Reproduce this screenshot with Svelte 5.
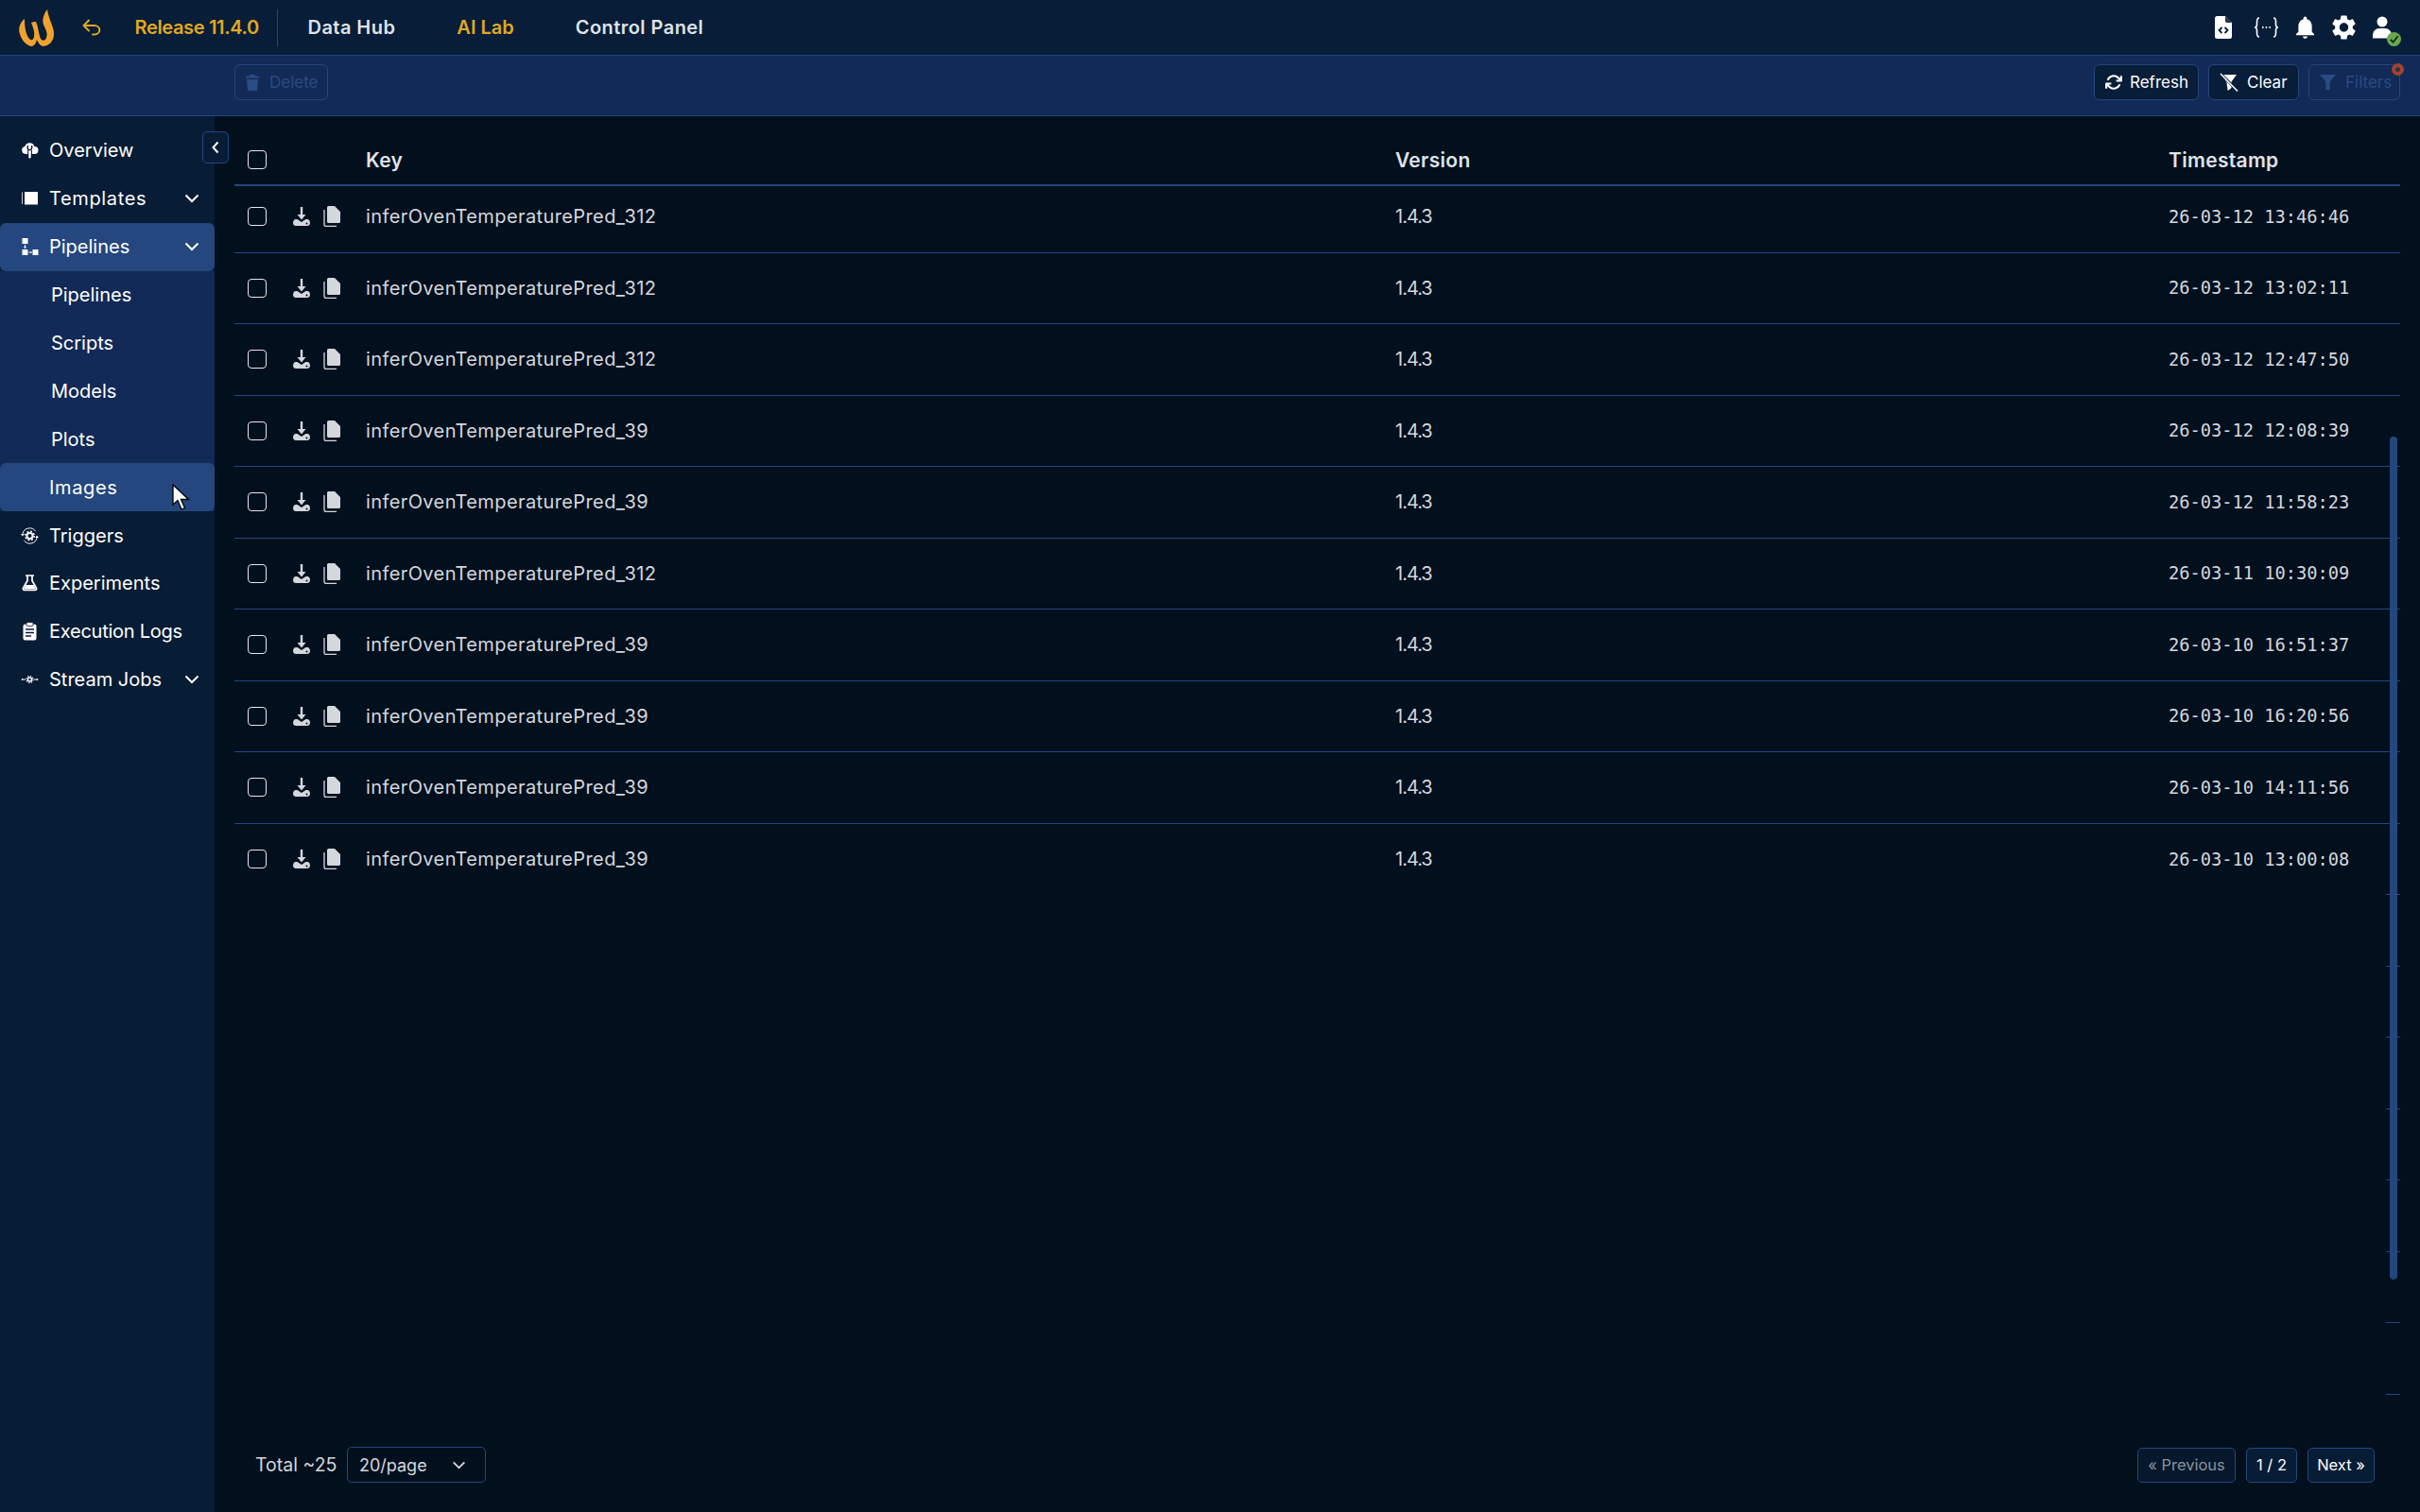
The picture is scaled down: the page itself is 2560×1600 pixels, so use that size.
<script>
	const subItems = ['Pipelines', 'Scripts', 'Models', 'Plots'];

	const rows = [
		['inferOvenTemperaturePred_312', '26-03-12 13:46:46'],
		['inferOvenTemperaturePred_312', '26-03-12 13:02:11'],
		['inferOvenTemperaturePred_312', '26-03-12 12:47:50'],
		['inferOvenTemperaturePred_39', '26-03-12 12:08:39'],
		['inferOvenTemperaturePred_39', '26-03-12 11:58:23'],
		['inferOvenTemperaturePred_312', '26-03-11 10:30:09'],
		['inferOvenTemperaturePred_39', '26-03-10 16:51:37'],
		['inferOvenTemperaturePred_39', '26-03-10 16:20:56'],
		['inferOvenTemperaturePred_39', '26-03-10 14:11:56'],
		['inferOvenTemperaturePred_39', '26-03-10 13:00:08']
	];

	const fillers = [1, 2, 3, 4, 5, 6, 7];
</script>

<div class="app">
	<header class="topbar">
		<svg class="logo" viewBox="17 9 40 40" width="40" height="40">
			<path fill="#f0a22e" d="M26 20C21 24 19 30 21 36C23 43 28 48 33 49C36 49 38 46 39 42C41 46 43 49 46 49C52 48 57 44 57 36C57 28 52 22 50 10C47 14 44 20 46 26C48 31 51 35 49 40C48 43 45 44 43 41C41 37 41 30 38 23C36 23 35 23 33 24C35 29 37 34 36 39C35 43 33 43 31 41C27 36 26 28 26 20Z" />
		</svg>
		<svg class="back" viewBox="0 0 20 18" width="20" height="18" fill="none" stroke="#e2a81f" stroke-width="2" stroke-linecap="round" stroke-linejoin="round">
			<path d="M7 1.5L1.5 7L7 12.5M1.5 7H13a5 4.5 0 0 1 0 9.5h-2" />
		</svg>
		<span class="release">Release 11.4.0</span>
		<span class="divider"></span>
		<nav class="nav">
			<span>Data Hub</span>
			<span class="active">AI Lab</span>
			<span>Control Panel</span>
		</nav>
		<div class="top-icons">
			<svg viewBox="0 0 18 24" width="18" height="24">
				<path fill="#fff" d="M2.5 0H11l7 7v14.5a2.5 2.5 0 0 1-2.5 2.5h-13A2.5 2.5 0 0 1 0 21.500V2.500A2.500 2.500 0 0 1 2.500 0Z" />
				<path fill="#071d38" d="M11 0v5a2 2 0 0 0 2 2h5l-1-1-5-5Z" opacity="0.9" />
				<path fill="none" stroke="#071d38" stroke-width="1.800" d="M7.500 12L4.500 15L7.500 18M10.500 12L13.500 15L10.500 18" />
			</svg>
			<svg viewBox="0 0 27 22" width="27" height="22" fill="none" stroke="#fff" stroke-width="1.600" class="braces">
				<path d="M6 1C3.500 1 3.500 3 3.500 5V8C3.500 10 2.500 11 1 11C2.500 11 3.500 12 3.500 14V17C3.500 19 3.500 21 6 21M21 1C23.500 1 23.500 3 23.500 5V8C23.500 10 24.500 11 26 11C24.500 11 23.500 12 23.500 14V17C23.500 19 23.500 21 21 21" />
				<path d="M9 11h1.500M12.750 11h1.500M16.500 11h1.500" stroke-width="2" />
			</svg>
			<svg viewBox="3.500 2 17 21" width="21" height="25" class="bell"><path fill="#fff" d="M12 22c1.100 0 2-.9 2-2h-4c0 1.100.89 2 2 2zm6-6v-5c0-3.070-1.640-5.640-4.500-6.320V4c0-.83-.67-1.500-1.500-1.500s-1.500.67-1.500 1.500v.68C7.630 5.360 6 7.920 6 11v5l-2 2v1h16v-1l-2-2z" /></svg>
			<svg viewBox="2.400 2 19.200 20" width="25" height="26"><path fill="#fff" d="M19.140 12.940c.04-.3.06-.61.06-.94 0-.32-.02-.64-.07-.94l2.030-1.580c.18-.14.23-.41.12-.61l-1.920-3.320c-.12-.22-.37-.29-.59-.22l-2.390.96c-.5-.38-1.030-.7-1.620-.94l-.36-2.540c-.04-.24-.24-.41-.48-.41h-3.840c-.24 0-.43.17-.47.41l-.36 2.540c-.59.24-1.130.57-1.620.94l-2.390-.96c-.22-.08-.47 0-.59.22L2.740 8.870c-.12.21-.08.47.12.61l2.030 1.580c-.05.3-.09.63-.09.94s.02.64.07.94l-2.030 1.580c-.18.14-.23.41-.12.61l1.920 3.320c.12.22.37.29.59.22l2.390-.96c.5.38 1.030.7 1.620.94l.36 2.540c.05.24.24.41.48.41h3.840c.24 0 .44-.17.47-.41l.36-2.540c.59-.24 1.130-.56 1.620-.94l2.390.96c.22.08.47 0 .59-.22l1.920-3.320c.12-.22.07-.47-.12-.61l-2.010-1.580zM12 15.600c-1.980 0-3.600-1.620-3.600-3.600s1.620-3.600 3.600-3.600 3.600 1.620 3.600 3.600-1.620 3.600-3.600 3.600z" /></svg>
			<span class="user">
				<svg viewBox="0 0 20 24" width="20" height="24">
					<circle cx="10" cy="6" r="5.500" fill="#fff" />
					<path fill="#fff" d="M0 21c0-5 3-8 7-8h6c4 0 7 3 7 8v2.500H0Z" />
				</svg>
				<span class="status">
					<svg viewBox="0 0 12 12" width="11" height="11" fill="none" stroke="#0c2a18" stroke-width="2"><path d="M2 6.500L5 9.500L10.500 2.500" /></svg>
				</span>
			</span>
		</div>
	</header>

	<div class="toolbar">
		<button class="btn off delete">
			<svg viewBox="0 0 14 17" width="14" height="17" fill="currentColor"><path d="M4.500 0h5l.7 1.500H14V3.500H0V1.500h3.800ZM1 5h12l-1 12H2Z" /></svg>
			Delete
		</button>
		<button class="btn refresh">
			<svg viewBox="0 0 24 24" width="18" height="18" fill="none" stroke="#fff" stroke-width="2.800" stroke-linejoin="round"><path d="M22.500 3v7h-7M1.500 21v-7h7M3.500 9a9 9 0 0 1 14.850-3.360L22.500 10M1.500 14l4.150 4.360A9 9 0 0 0 20.500 15" /></svg>
			Refresh
		</button>
		<button class="btn clear">
			<svg viewBox="0 0 20 20" width="20" height="20">
				<path fill="#fff" d="M2 2h16l-5.500 7.500V16l-3 2.500h-1l-1-8Z" />
				<path stroke="#071d38" stroke-width="3" d="M0 0L20 20" />
				<path stroke="#fff" stroke-width="1.500" d="M1 1L19 19.500" />
			</svg>
			Clear
		</button>
		<button class="btn off filters">
			<svg viewBox="0 0 17 16" width="17" height="16" fill="currentColor"><path d="M0 0h17l-6.300 7.500V16H6.300V7.500Z" /></svg>
			Filters
			<span class="dot"></span>
		</button>
	</div>

	<div class="body">
		<aside class="sidebar">
			<a class="item">
				<svg viewBox="0 0 18 18" width="18" height="18">
					<path fill="#fff" d="M4.500 13A4 4 0 0 1 3.800 5.100A5.300 5.300 0 0 1 14 5A4 4 0 0 1 14 13Z" />
					<path fill="none" stroke="#071c35" stroke-width="1.400" d="M6.800 4v2.500a2.200 2.200 0 0 0 4.400 0V4M7.300 9v5M10.700 9v5" />
					<rect x="7.800" y="9" width="2.400" height="8.500" rx="1" fill="#fff" />
				</svg>
				<span>Overview</span>
			</a>
			<a class="item">
				<svg viewBox="0 0 18 18" width="18" height="18">
					<rect x="3.500" y="2" width="14" height="13.500" rx="0.500" fill="#fff" />
					<path stroke="#c9ced6" stroke-width="1" fill="none" d="M1 2.500V15" />
				</svg>
				<span class="loose">Templates</span>
				<svg class="chev" viewBox="0 0 16 10" width="16" height="10" fill="none" stroke="#fff" stroke-width="2"><path d="M1.500 1.500L8 8L14.500 1.500" /></svg>
			</a>
			<a class="item current">
				<svg viewBox="0 0 18 18" width="18" height="18" fill="#fff">
					<rect x="1" y="0" width="6" height="6" />
					<rect x="1" y="12" width="6" height="6" />
					<rect x="12" y="12" width="6" height="6" />
					<path d="M3.500 7h1v4h-1ZM2.500 9h3L4 11ZM8 14.500h3v1H8ZM10 13.500l1.500 1.500L10 16.500Z" />
				</svg>
				<span>Pipelines</span>
				<svg class="chev" viewBox="0 0 16 10" width="16" height="10" fill="none" stroke="#fff" stroke-width="2"><path d="M1.500 1.500L8 8L14.500 1.500" /></svg>
			</a>
			<div class="sub">
				{#each subItems as name}
					<a class="sub-item">{name}</a>
				{/each}
				<a class="sub-item hovered"><span class="loose">Images</span></a>
			</div>
			<a class="item">
				<svg viewBox="0 0 20 20" width="20" height="20" fill="none" stroke="#fff">
					<path stroke-width="1" d="M2 8A8 8 0 0 1 16.500 5M18 12A8 8 0 0 1 3.500 15" />
					<path fill="#fff" stroke="none" d="M0 8h4L2 10.500ZM16 12h4L18 9.500Z" />
					<circle cx="10" cy="10" r="3.200" stroke-width="2" />
					<circle cx="10" cy="10" r="5" stroke-width="1.600" stroke-dasharray="2 1.930" />
				</svg>
				<span>Triggers</span>
			</a>
			<a class="item">
				<svg viewBox="0 0 18 18" width="18" height="18" fill="none" stroke="#fff" stroke-width="1.700">
					<path d="M4.500 1h9M6.500 1v5.500L2.200 14a1.500 1.500 0 0 0 1.300 2.500h11a1.500 1.500 0 0 0 1.300-2.500L11.500 6.500V1" stroke-linejoin="round" />
					<path fill="#fff" stroke="none" d="M5 11h8l2.500 4.500h-13Z" />
				</svg>
				<span>Experiments</span>
			</a>
			<a class="item">
				<svg viewBox="0 0 18 20" width="18" height="20">
					<rect x="2" y="2.500" width="14" height="17" rx="2" fill="#fff" />
					<rect x="5.500" y="0.500" width="7" height="4" rx="1" fill="#fff" stroke="#071c35" stroke-width="0.800" />
					<path stroke="#071c35" stroke-width="1.500" d="M4.500 8h9M4.500 11.500h9M4.500 15h6" />
				</svg>
				<span class="tight">Execution Logs</span>
			</a>
			<a class="item">
				<svg viewBox="0 0 18 18" width="18" height="18" fill="none" stroke="#fff">
					<circle cx="9" cy="9" r="2" stroke-width="1.500" />
					<circle cx="9" cy="9" r="3.500" stroke-width="1.300" stroke-dasharray="1.300 1.450" />
					<path stroke-width="1" d="M2 9h2.500M13.500 9H16" />
					<circle cx="1.200" cy="9" r="1" fill="#fff" stroke="none" />
					<circle cx="16.800" cy="9" r="1" fill="#fff" stroke="none" />
				</svg>
				<span>Stream Jobs</span>
				<svg class="chev" viewBox="0 0 16 10" width="16" height="10" fill="none" stroke="#fff" stroke-width="2"><path d="M1.500 1.500L8 8L14.500 1.500" /></svg>
			</a>
		</aside>

		<main class="main">
			<button class="collapse">
				<svg viewBox="0 0 8 14" width="8" height="14" fill="none" stroke="#fff" stroke-width="2"><path d="M6.500 1.500L1.500 7L6.500 12.500" /></svg>
			</button>
			<svg class="cursor" viewBox="0 0 19 29" width="19" height="29">
				<path fill="#fff" stroke="#000" stroke-width="1.300" d="M1 1V22L6 17.500L10 27L13.500 25.500L9.500 16.500H17.500Z" />
			</svg>
			<span class="scrollbar"></span>

			<div class="table">
				<div class="row head">
					<span class="check"><input type="checkbox" /></span>
					<span>Key</span>
					<span>Version</span>
					<span>Timestamp</span>
				</div>
				<div class="rows">
					{#each rows as [key, stamp], i}
						<div class="row" class:ghost={i === rows.length - 1}>
							<span class="check">
								<input type="checkbox" />
								<svg class="dl" viewBox="0 0 18 20" width="18" height="20" fill="#d4d7dc">
									<path d="M7.800 0h2.400v8h3.300L9 13.500L4.500 8h3.300Z" />
									<path fill-rule="evenodd" d="M0 17c0-2 1-4 3-4h1.500L9 16l4.500-3H15c2 0 3 2 3 4s-1.500 3-3 3H3c-1.500 0-3-1-3-3Zm14.500-.6a1 1 0 1 0 0 2a1 1 0 0 0 0-2Z" />
								</svg>
								<svg class="cp" viewBox="0 0 18 22" width="18" height="22" fill="#d4d7dc">
									<path d="M5.500 0H12l6 6v10.500a1.500 1.500 0 0 1-1.500 1.500h-11A1.500 1.500 0 0 1 4 16.500V1.500A1.500 1.500 0 0 1 5.500 0Z" />
									<path d="M1 4v15.500A2 2 0 0 0 3 21.500h11" fill="none" stroke="#d4d7dc" stroke-width="1.300" />
								</svg>
							</span>
							<span class="key">{key}</span>
							<span class="version">1.4.3</span>
							<span class="stamp">{stamp}</span>
						</div>
					{/each}
					{#each fillers as f (f)}
						<div class="row ghost"></div>
					{/each}
				</div>
			</div>

			<footer class="footer">
				<span class="total">Total ~25</span>
				<div class="select">
					<span>20/page</span>
					<svg viewBox="0 0 16 10" width="15" height="9" fill="none" stroke="#d4d7dc" stroke-width="2"><path d="M1.500 1.500L8 8L14.500 1.500" /></svg>
				</div>
				<div class="pager">
					<button class="page prev">« Previous</button>
					<button class="page count">1 / 2</button>
					<button class="page next">Next »</button>
				</div>
			</footer>
		</main>
	</div>
</div>

<style>
	:global(body) {
		margin: 0;
		background: #020f1d;
	}

	.app {
		display: flex;
		flex-direction: column;
		height: 1600px;
		overflow: hidden;
		font-family: Inter, "Noto Sans", sans-serif;
		color: #fff;
	}

	.topbar {
		display: flex;
		align-items: center;
		flex: none;
		box-sizing: border-box;
		height: 59px;
		padding-left: 17px;
		background: #071d38;
		border-bottom: 1px solid #24477f;
		font-size: 20px;
		font-weight: 600;
	}

	.logo {
		flex: none;
	}

	.back {
		flex: none;
		margin-left: 30px;
	}

	.release {
		flex: none;
		margin-left: 35.5px;
		color: #e2a81f;
		width: 132px;
		letter-spacing: -0.35px;
		white-space: nowrap;
	}

	.divider {
		flex: none;
		width: 1px;
		height: 39px;
		margin: 0 32px 0 18px;
		background: #24477f;
	}

	.nav {
		display: flex;
		gap: 65px;
		color: #dfe3e8;
		letter-spacing: 0.45px;
		white-space: nowrap;
	}

	.nav .active {
		color: #e2a81f;
		letter-spacing: 0;
	}

	.top-icons {
		display: flex;
		align-items: center;
		margin-left: auto;
		margin-right: 30px;
		gap: 18px;
	}

	.braces {
		margin-left: 5px;
	}

	.bell {
		margin-left: -1px;
	}

	.user {
		position: relative;
		display: flex;
	}

	.status {
		position: absolute;
		right: -10px;
		bottom: -8px;
		display: flex;
		align-items: center;
		justify-content: center;
		width: 15px;
		height: 15px;
		border-radius: 50%;
		background: #6aa84f;
	}

	.toolbar {
		display: flex;
		align-items: flex-start;
		flex: none;
		box-sizing: border-box;
		height: 64px;
		padding: 9px 21px 0 248px;
		gap: 10px;
		background: #122a57;
		border-bottom: 1px solid #24477f;
	}

	.btn {
		position: relative;
		display: flex;
		align-items: center;
		box-sizing: border-box;
		height: 38px;
		padding: 0 0 0 11px;
		gap: 10px;
		background: #071d38;
		border: 1px solid #24477f;
		border-radius: 6px;
		color: #fff;
		font: 400 17px Inter, "Noto Sans", sans-serif;
		white-space: nowrap;
	}

	.btn svg {
		flex: none;
	}

	.btn.off {
		background: none;
		color: #2a4c82;
	}

	.delete {
		width: 99px;
		margin-right: auto;
		gap: 11px;
	}

	.refresh {
		width: 111px;
		gap: 8px;
	}

	.clear {
		width: 96px;
		gap: 9px;
	}

	.filters {
		width: 97px;
	}

	.dot {
		position: absolute;
		top: -2px;
		right: -5px;
		box-sizing: border-box;
		width: 13px;
		height: 13px;
		border: 4px solid #a4442c;
		border-radius: 50%;
		background: #2c3350;
	}

	.body {
		display: flex;
		flex: 1;
		min-height: 0;
	}

	.sidebar {
		flex: none;
		box-sizing: border-box;
		width: 227px;
		padding-top: 11px;
		background: #071c35;
		font-size: 20px;
	}

	.item,
	.sub-item {
		display: flex;
		align-items: center;
		box-sizing: border-box;
		height: 50.9px;
		white-space: nowrap;
	}

	.item {
		padding-left: 22px;
		padding-right: 16px;
		gap: 11px;
	}

	.item > svg:first-child {
		flex: none;
		width: 19px;
	}

	.loose {
		letter-spacing: 0.65px;
	}

	.tight {
		letter-spacing: -0.25px;
	}

	.chev {
		margin-left: auto;
	}

	.current {
		background: #24477f;
		border-radius: 6px;
	}

	.sub {
		background: #122a57;
	}

	.sub-item {
		padding-left: 54px;
	}

	.hovered {
		padding-left: 52px;
		background: #24477f;
		border-radius: 6px;
	}

	.main {
		position: relative;
		display: flex;
		flex-direction: column;
		flex: 1;
		min-width: 0;
		background: #020f1d;
	}

	.collapse {
		position: absolute;
		top: 16px;
		left: -13px;
		z-index: 2;
		display: flex;
		align-items: center;
		justify-content: center;
		box-sizing: border-box;
		width: 28px;
		height: 34px;
		padding: 0;
		background: #071c35;
		border: 1px solid #24477f;
		border-radius: 5px;
	}

	.cursor {
		position: absolute;
		top: 389px;
		left: -45px;
		z-index: 2;
	}

	.scrollbar {
		position: absolute;
		top: 339px;
		right: 24px;
		z-index: 2;
		width: 8px;
		height: 892px;
		border-radius: 4px;
		background: #24477f;
	}

	.table {
		flex: 1;
		min-height: 0;
		overflow: hidden;
		padding: 0 21px;
	}

	.row {
		display: grid;
		grid-template-columns: 139px 1089px 818px 1fr;
		align-items: center;
		box-sizing: border-box;
		height: 75.5px;
		border-bottom: 1px solid #24477f;
		color: #d4d7dc;
		font-size: 20px;
	}

	.row.head {
		position: relative;
		z-index: 1;
		height: 74px;
		padding-top: 20px;
		background: #020f1d;
		border-bottom-width: 2px;
		font-size: 21px;
		font-weight: 600;
		letter-spacing: 0.3px;
		color: #dfe3e8;
	}

	.rows {
		margin-top: -5px;
	}

	.row.ghost {
		border-bottom: none;
		background: linear-gradient(#24477f, #24477f) right bottom / 15px 1px no-repeat;
	}

	.check {
		display: flex;
		align-items: center;
		padding-left: 14px;
	}

	input[type='checkbox'] {
		appearance: none;
		flex: none;
		box-sizing: border-box;
		width: 20px;
		height: 20px;
		margin: 0;
		background: none;
		border: 1px solid #e6e8ec;
		border-radius: 4px;
	}

	.dl {
		margin-left: 28px;
	}

	.cp {
		margin-left: 14px;
	}

	.key {
		letter-spacing: 0.4px;
	}

	.version {
		letter-spacing: -1px;
	}

	.stamp {
		font: 18.7px "DejaVu Sans Mono", monospace;
		letter-spacing: 0;
	}

	.footer {
		display: flex;
		align-items: center;
		flex: none;
		box-sizing: border-box;
		height: 100px;
		padding: 0 48px 0 43px;
		color: #d4d7dc;
		font-size: 18px;
	}

	.total {
		width: 97px;
		font-size: 19.5px;
		white-space: nowrap;
	}

	.select {
		display: flex;
		align-items: center;
		justify-content: space-between;
		box-sizing: border-box;
		width: 147px;
		height: 38px;
		padding: 0 20px 0 12px;
		border: 1px solid #24477f;
		border-radius: 5px;
	}

	.pager {
		display: flex;
		margin-left: auto;
		gap: 11px;
	}

	.page {
		box-sizing: border-box;
		height: 37px;
		padding: 0;
		background: #071c35;
		border: 1px solid #24477f;
		border-radius: 5px;
		color: #fff;
		font: 400 16.5px Inter, "Noto Sans", sans-serif;
		white-space: nowrap;
	}

	.page.prev {
		width: 104px;
		background: #07182c;
		color: #8a929c;
	}

	.page.count {
		width: 54px;
	}

	.page.next {
		width: 71px;
	}
</style>
